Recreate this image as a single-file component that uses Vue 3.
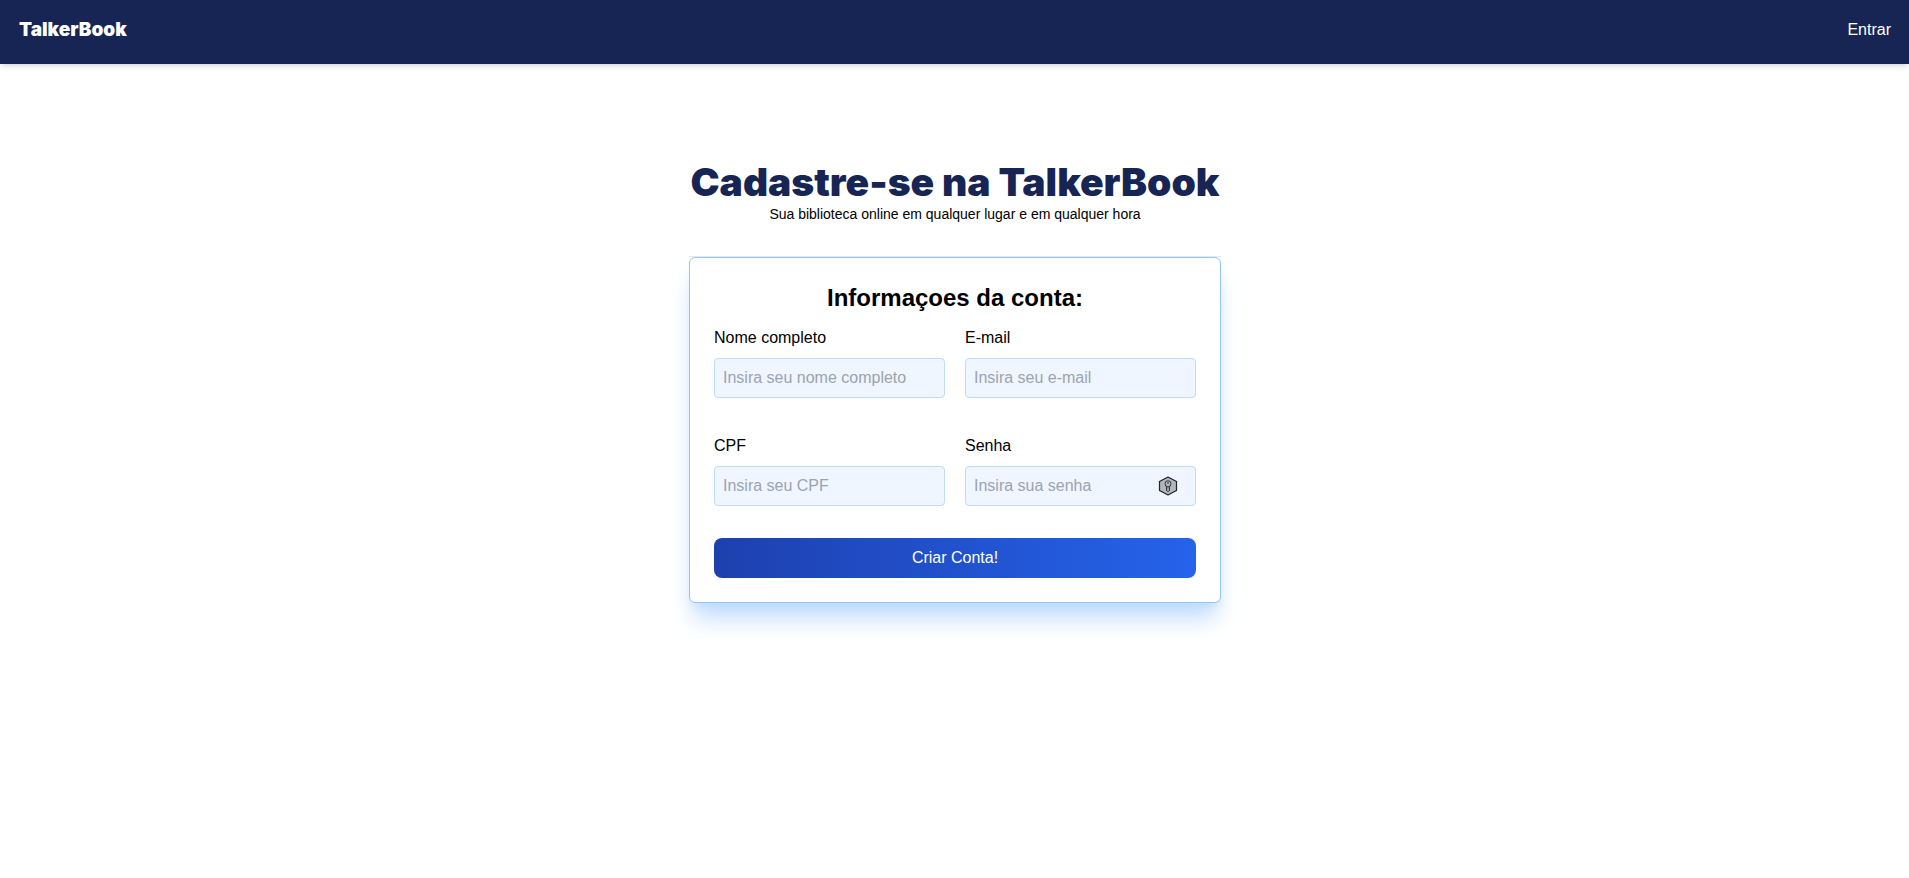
<script setup>
import { reactive } from 'vue'

const fields = [
  { id: 'name', label: 'Nome completo', type: 'text', placeholder: 'Insira seu nome completo' },
  { id: 'email', label: 'E-mail', type: 'email', placeholder: 'Insira seu e-mail' },
  { id: 'cpf', label: 'CPF', type: 'text', placeholder: 'Insira seu CPF' },
  { id: 'password', label: 'Senha', type: 'password', placeholder: 'Insira sua senha' },
]
const form = reactive({ name: '', email: '', cpf: '', password: '' })
</script>

<template>
  <header class="topbar">
    <a class="brand" href="#">TalkerBook</a>
    <nav>
      <a class="login" href="#">Entrar</a>
    </nav>
  </header>
  <main class="page">
    <section class="signup">
      <h1>Cadastre-se na TalkerBook</h1>
      <p class="subtitle">Sua biblioteca online em qualquer lugar e em qualquer hora</p>
      <hr />
      <form class="card" @submit.prevent>
        <h2>Informaçoes da conta:</h2>
        <div class="fields">
          <div v-for="field in fields" :key="field.id" class="field">
            <label :for="field.id">{{ field.label }}</label>
            <div class="control">
              <input
                :id="field.id"
                v-model="form[field.id]"
                :type="field.type"
                :placeholder="field.placeholder"
              />
              <svg v-if="field.id === 'password'" class="key" viewBox="0 0 20 20" aria-hidden="true">
                <path d="M10 1 18.500 5.500V14.500L10 19 1.500 14.500V5.500Z" fill="#b1b5bc" stroke="#202226" stroke-width="1.200" stroke-linejoin="round" />
                <path d="M8.500 10V14.500L10 15.500 11.500 14.500V10" fill="#b1b5bc" stroke="#25272b" stroke-width="0.900" />
                <circle cx="10" cy="7.800" r="3" fill="#b1b5bc" stroke="#25272b" stroke-width="0.900" />
                <circle cx="10" cy="7" r="0.800" fill="#25272b" />
                <path d="M10 10.500V13.500" stroke="#55585e" stroke-width="0.700" />
              </svg>
            </div>
          </div>
        </div>
        <button type="submit">Criar Conta!</button>
      </form>
    </section>
  </main>
</template>

<style>
body {
  margin: 0;
  background: #fff;
}
</style>

<style scoped>
.topbar,
.page {
  font-family: "Liberation Sans", Arial, sans-serif;
  font-size: 16px;
  line-height: 24px;
  color: #000;
}
.topbar,
.topbar *,
.page,
.page * {
  box-sizing: border-box;
}
.topbar {
  display: flex;
  justify-content: space-between;
  align-items: center;
  height: 64px;
  padding: 0 18px 4px 19px;
  background: #172554;
  box-shadow: 0 4px 6px -1px rgba(0, 0, 0, 0.1), 0 2px 4px -2px rgba(0, 0, 0, 0.1);
}
.topbar a {
  color: #fff;
  text-decoration: none;
}
.topbar .brand {
  font-family: "Arial Black", Inter, sans-serif;
  font-size: 19px;
  font-weight: 900;
  line-height: 28px;
}
.page {
  display: flex;
  justify-content: center;
  padding: 96px 16px 48px 17px;
}
.signup {
  width: 100%;
  max-width: 532px;
}
h1,
h2,
p {
  margin: 0;
  text-align: center;
}
h1 {
  font-family: "Arial Black", Inter, sans-serif;
  font-size: 39px;
  font-weight: 900;
  line-height: 44px;
  color: #172554;
}
.subtitle {
  font-size: 14px;
  line-height: 20px;
}
hr {
  margin: 32px 0 0;
  border: 0;
  border-top: 1px solid #e5e7eb;
}
.card {
  display: flex;
  flex-direction: column;
  padding: 24px;
  border: 1px solid #93c5fd;
  border-radius: 6px;
  background: #fff;
  box-shadow: 0 20px 25px -5px #bfdbfe, 0 8px 10px -6px #bfdbfe;
}
h2 {
  font-size: 24px;
  font-weight: 700;
  line-height: 32px;
}
.fields {
  display: grid;
  grid-template-columns: repeat(2, minmax(0, 1fr));
  gap: 36px 20px;
  margin-top: 12px;
}
.field {
  display: flex;
  flex-direction: column;
  gap: 8px;
}
.control {
  position: relative;
}
input {
  display: block;
  width: 100%;
  height: 40px;
  padding: 0 8px;
  border: 1px solid #bfdbfe;
  border-radius: 4px;
  background: #eff6ff;
  color: #000;
  font: inherit;
}
input::placeholder {
  color: #9ca3af;
  opacity: 1;
}
.key {
  position: absolute;
  top: 10px;
  right: 18px;
  width: 20px;
  height: 20px;
  fill: none;
}
button {
  height: 40px;
  margin-top: 32px;
  border: 0;
  border-radius: 8px;
  background: linear-gradient(to right, #1e40af, #2563eb);
  color: #fff;
  font: inherit;
  cursor: pointer;
}
</style>
